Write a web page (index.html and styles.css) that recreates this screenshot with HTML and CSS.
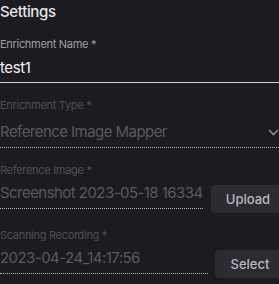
FILE: index.html
```html
<!DOCTYPE html>
<html lang="en">
<head>
    <meta charset="UTF-8">
    <meta name="viewport" content="width=device-width, initial-scale=1.0">
    <title>Settings</title>
    <link rel="stylesheet" href="styles.css">
</head>
<body>
    <div class="panel">
        <h2 class="title">Settings</h2>

        <!-- Nome -->
        <div class="field">
            <label class="label">Enrichment Name <span class="req">*</span></label>
            <div class="value">test1</div>
        </div>

        <!-- Tipo (desabilitado) -->
        <div class="field disabled">
            <label class="label">Enrichment Type <span class="req">*</span></label>
            <div class="value select">
                <span class="text">Reference Image Mapper</span>
                <svg class="chevron" width="11" height="7" viewBox="0 0 11 7">
                    <path d="M1 1 L5.5 5.5 L10 1" fill="none" stroke="currentColor" stroke-width="1.6"/>
                </svg>
            </div>
        </div>

        <div class="row">
            <div class="field disabled grow">
                <label class="label">Reference Image <span class="req">*</span></label>
                <div class="value"><span class="text">Screenshot 2023-05-18 163345.png</span></div>
            </div>
            <button class="btn upload">Upload</button>
        </div>

        <div class="row">
            <div class="field disabled grow">
                <label class="label">Scanning Recording <span class="req">*</span></label>
                <div class="value"><span class="text">2023-04-24_14:17:56</span></div>
            </div>
            <button class="btn select-btn">Select</button>
        </div>
    </div>
</body>
</html>
```

FILE: styles.css
```css
body {
    margin: 0;
    overflow: hidden;
    background-color: #1c1b20;
    font-family: Inter, "Noto Sans", sans-serif;
}

.panel {
    display: flex;
    flex-direction: column;
    gap: 15px;
    width: 285px;
    padding-top: 2px;
}

.title {
    margin: 0;
    font-size: 15px;
    line-height: 20px;
    font-weight: 500;
    letter-spacing: -0.35px;
    color: #e4e4e7;
}

.field {
    display: flex;
    flex-direction: column;
}

.label {
    font-size: 11px;
    line-height: 14px;
    letter-spacing: -0.3px;
    color: #a09fa6;
    margin-bottom: 7px;
}

.value {
    font-size: 15px;
    line-height: 20px;
    letter-spacing: -0.4px;
    color: #f2f2f4;
    padding-bottom: 4px;
    border-bottom: 1px solid #cfcfd4;
    white-space: nowrap;
    overflow: hidden;
}

.disabled .label {
    color: #4f4e55;
    margin-bottom: 6px;
}

.disabled .value {
    color: #5a5960;
    letter-spacing: -0.55px;
    border-bottom: 1px dotted #b8b8bc;
    padding-bottom: 5px;
}

.select {
    display: flex;
    align-items: center;
    justify-content: space-between;
    padding-top: 4px;
    padding-right: 6px;
}

.chevron {
    color: #8d8c93;
}

.row {
    display: flex;
    align-items: flex-end;
    gap: 8px;
}

.grow {
    flex: 1;
    min-width: 0;
    margin-bottom: 4px;
}

.btn {
    height: 28px;
    border: none;
    border-radius: 4px;
    background-color: #2c2b31;
    color: #b9b8bf;
    font-family: Inter, "Noto Sans", sans-serif;
    font-size: 13px;
    font-weight: 500;
    cursor: pointer;
}

.upload {
    width: 74px;
}

.select-btn {
    width: 70px;
    margin-left: -1px;
}
```
